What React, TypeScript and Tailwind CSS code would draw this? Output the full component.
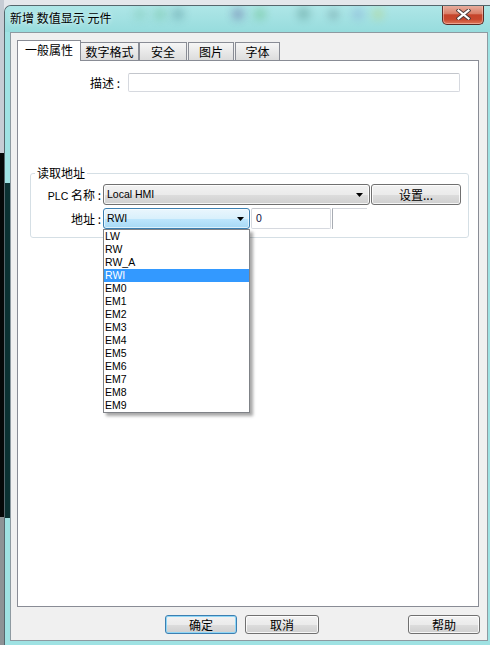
import React from "react";

const CJK = "font-['Noto_Sans_CJK_SC',sans-serif]";
const LAT = "font-['Liberation_Sans',sans-serif]";
const BTN =
  "border border-[#707070] rounded-[3px] bg-[linear-gradient(to_bottom,#f2f2f2_0%,#ebebeb_50%,#dddddd_51%,#cfcfcf_100%)] shadow-[inset_0_0_0_1px_rgba(255,255,255,0.8)]";
const TAB =
  "h-[18px] border border-b-0 border-[#898c95] bg-[linear-gradient(to_bottom,#f6f6f6,#dcdcdc)] flex justify-center pt-[1px] text-[12px] leading-[16px] " +
  CJK;

function Arrow() {
  return (
    <svg width="7" height="4" viewBox="0 0 7 4">
      <path d="M0 0h7L3.5 4z" fill="#000" />
    </svg>
  );
}

const blobs = [
  { x: 140, y: 14, s: 12, c: "#7cc9b0" },
  { x: 160, y: 14, s: 12, c: "#6cbf98" },
  { x: 178, y: 14, s: 12, c: "#4f8f96" },
  { x: 238, y: 14, s: 12, c: "#5d5a9c" },
  { x: 260, y: 14, s: 12, c: "#5dbb7c" },
  { x: 303, y: 13, s: 13, c: "#4f8d88" },
  { x: 333, y: 14, s: 9, c: "#4b6f78" },
  { x: 358, y: 14, s: 12, c: "#82a5d8" },
  { x: 378, y: 14, s: 12, c: "#b9d57a" },
];

const items = ["LW", "RW", "RW_A", "RWI", "EM0", "EM1", "EM2", "EM3", "EM4", "EM5", "EM6", "EM7", "EM8", "EM9"];

export default function App() {
  return (
    <div className="w-[490px] h-[645px] overflow-hidden flex bg-[#e4e7eb] text-black">
      {/* desktop strip behind window */}
      <div className="w-[4px] shrink-0 flex flex-col">
        <div className="h-[153px] bg-[#c6ccd4]" />
        <div className="h-[364px] bg-[#050808]" />
        <div className="flex-1 bg-[#8d9396]" />
      </div>

      {/* window */}
      <div className="flex-1 mt-[5px] flex flex-col border-l border-t border-[#56676d] rounded-tl-[7px] bg-[#9fe2e3] overflow-hidden">
        {/* title bar */}
        <div className="h-[26px] shrink-0 flex items-start relative bg-[linear-gradient(to_bottom,#aee6e7,#97dcdd)]">
          {blobs.map((b, i) => (
            <div
              key={i}
              className="absolute rounded-full blur-[4px] opacity-45"
              style={{ left: b.x - 5 - b.s / 2, top: b.y - 6 - b.s / 2, width: b.s, height: b.s, background: b.c }}
            />
          ))}
          <span className={"relative ml-[5px] mt-[4px] text-[12px] leading-[16px] [text-shadow:0_0_5px_rgba(255,255,255,0.9)] " + CJK}>
            新增 数值显示 元件
          </span>
          <div className="relative ml-auto mr-[6px] -mt-px w-[42px] h-[20px] border border-t-0 border-[#5a2a24] rounded-b-[5px] bg-[linear-gradient(to_bottom,#eab3a5_0%,#d97f68_45%,#c5442b_52%,#c8472d_75%,#de7759_100%)] shadow-[inset_0_0_0_1px_rgba(255,210,200,0.5)] flex items-center justify-center">
            <svg width="15" height="11" viewBox="0 0 15 11">
              <path d="M2.5 1.5L12.5 9.5M12.5 1.5L2.5 9.5" stroke="#4a3a3a" strokeWidth="4" strokeLinecap="square" />
              <path d="M2.5 1.5L12.5 9.5M12.5 1.5L2.5 9.5" stroke="#ffffff" strokeWidth="2.2" strokeLinecap="square" />
            </svg>
          </div>
        </div>

        {/* body */}
        <div className="flex flex-1">
          <div className="w-[5px] shrink-0 flex flex-col">
            <div className="h-[151px]" />
            <div className="h-[335px] bg-[#0b3132]" />
            <div className="flex-1" />
          </div>

          {/* client area */}
          <div className="w-[478px] h-[609px] shrink-0 border border-[#8e9aa1] bg-[#f0f0f0] flex flex-col pt-[7px] pl-[6px] pr-[8px]">
            {/* tabs */}
            <div className="h-[20px] flex items-end relative z-10">
              <div className={"w-[64px] h-[21px] -mb-px bg-white border border-b-0 border-[#898c95] flex justify-center pt-[1px] text-[12px] leading-[16px] " + CJK}>
                一般属性
              </div>
              <div className={TAB + " w-[59px] -ml-px"}>数字格式</div>
              <div className={TAB + " w-[48px]"}>安全</div>
              <div className={TAB + " w-[46px] ml-px"}>图片</div>
              <div className={TAB + " w-[45px] ml-px"}>字体</div>
            </div>

            {/* panel */}
            <div className="h-[547px] border border-[#898c95] bg-white flex flex-col pt-[12px]">
              <div className="h-[19px] flex items-center">
                <div className={"w-[102px] text-right text-[12px] leading-[16px] " + CJK}>描述 :</div>
                <div className="ml-[8px] w-[332px] h-[19px] border border-[#d6d9df] border-t-[#c3c6cc] rounded-[2px] bg-white" />
              </div>

              <fieldset className="mt-[73px] ml-[12px] w-[439px] border border-[#d5dfe5] rounded-[3px] pt-[3px] pb-[8px]">
                <legend className={"ml-[4px] px-[2px] text-[12px] leading-[16px] " + CJK}>读取地址</legend>

                <div className="h-[21px] flex items-center">
                  <div className="w-[70px] text-right leading-[16px]">
                    <span className={LAT + " text-[10.5px]"}>PLC</span>
                    <span className={CJK + " text-[12px]"}> 名称 :</span>
                  </div>
                  <div className={"ml-[2px] w-[267px] h-[21px] border border-[#707070] rounded-[3px] bg-[linear-gradient(to_bottom,#f2f2f2_0%,#ebebeb_50%,#dddddd_51%,#cfcfcf_100%)] shadow-[inset_0_0_0_1px_rgba(255,255,255,0.8)] flex items-center pl-[3px] pr-[6px]"}>
                    <span className={LAT + " text-[10.5px] leading-[13px] flex-1"}>Local HMI</span>
                    <Arrow />
                  </div>
                  <div className={BTN + " ml-[1px] w-[90px] h-[21px] flex items-center justify-center text-[12px] leading-[16px] " + CJK}>
                    设置...
                  </div>
                </div>

                <div className="mt-[3px] h-[21px] flex items-center">
                  <div className={"w-[70px] text-right text-[12px] leading-[16px] " + CJK}>地址 :</div>
                  <div className="relative ml-[2px] w-[147px] h-[21px]">
                    <div className="w-full h-full border border-[#3c7fb1] rounded-[3px] bg-[linear-gradient(to_bottom,#eaf6fd_0%,#d9f0fc_50%,#bee6fd_51%,#a7d9f5_100%)] shadow-[inset_0_0_0_1px_rgba(255,255,255,0.6)] flex items-center pl-[3px] pr-[5px]">
                      <span className={LAT + " text-[10.5px] leading-[13px] flex-1"}>RWI</span>
                      <Arrow />
                    </div>
                    <div className="absolute left-0 top-full z-20 w-[147px] border border-[#7f8287] bg-white shadow-[3px_3px_3px_rgba(0,0,0,0.35)]">
                      {items.map((it) => (
                        <div
                          key={it}
                          className={
                            LAT +
                            " h-[13px] pl-[1px] text-[10.5px] leading-[13px] " +
                            (it === "RWI" ? "bg-[#3399ff] text-white" : "text-black")
                          }
                        >
                          {it}
                        </div>
                      ))}
                    </div>
                  </div>
                  <div className={"ml-[1px] w-[80px] h-[21px] border border-[#d6d9df] border-t-[#c3c6cc] rounded-[2px] bg-white flex items-center pl-[4px] text-[10.5px] leading-[13px] text-[#101040] " + LAT}>
                    0
                  </div>
                  <div className="ml-[1px] w-[35px] h-[21px] border-l border-t border-l-[#a8acb3] border-t-[#d3d6dc]" />
                </div>
              </fieldset>
            </div>

            {/* bottom buttons */}
            <div className="mt-[8px] h-[19px] flex -mr-px">
              <div className={"ml-[148px] w-[72px] h-[19px] border border-[#3c7fb1] rounded-[3px] bg-[linear-gradient(to_bottom,#f2f2f2_0%,#ebebeb_50%,#dddddd_51%,#cfcfcf_100%)] shadow-[inset_0_0_0_1px_#8fd6f6] flex items-center justify-center text-[12px] leading-[16px] " + CJK}>
                确定
              </div>
              <div className={BTN + " ml-[8px] w-[74px] h-[19px] flex items-center justify-center text-[12px] leading-[16px] " + CJK}>
                取消
              </div>
              <div className="flex-1" />
              <div className={BTN + " w-[72px] h-[19px] flex items-center justify-center text-[12px] leading-[16px] " + CJK}>
                帮助
              </div>
            </div>
          </div>

          <div className="flex-1" />
        </div>
      </div>
    </div>
  );
}
